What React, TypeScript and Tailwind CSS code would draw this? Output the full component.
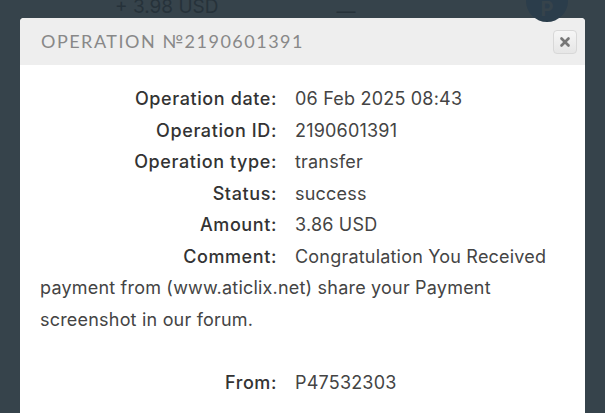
import { X } from 'lucide-react'

const ROWS = [
  { label: 'Operation date:', value: '06 Feb 2025 08:43' },
  { label: 'Operation ID:', value: '2190601391' },
  { label: 'Operation type:', value: 'transfer' },
  { label: 'Status:', value: 'success' },
  { label: 'Amount:', value: '3.86 USD' },
]

function Label({ children }: { children: string }) {
  return <span className="inline-block w-[237px] text-right text-[#333] font-medium tracking-[0.6px]">{children}</span>
}

function Row({ label, value }: { label: string; value: string }) {
  return (
    <div>
      <Label>{label}</Label>
      <span className="ml-[18px]">{value}</span>
    </div>
  )
}

export default function App() {
  return (
    <div className="relative h-[413px] w-full overflow-hidden bg-[#36434b] font-['Inter',sans-serif]">
      {/* page behind the overlay */}
      <div className="flex items-start h-[18px] text-[#26323a] text-[19px] leading-none">
        <span className="ml-[115px] -mt-[3px]">+ 3.98 USD</span>
        <span className="ml-[118px] mt-[2px]">—</span>
        <div className="ml-auto mr-[37px] -mt-[20px] w-[42px] h-[42px] rounded-full bg-[#2b3d4b] flex items-end justify-center text-[#36434b] font-bold text-[20px] pb-[3px]">P</div>
      </div>

      {/* modal */}
      <div className="mx-[20px] rounded-t-[4px] bg-white overflow-hidden">
        <div className="flex items-center justify-between h-[47px] bg-[#eeeeee] pl-[21px] pr-[8px]">
          <h2 className="font-['Lato',sans-serif] text-[18px] tracking-[1.5px] text-[#888]">OPERATION №2190601391</h2>
          <button className="w-[24px] h-[24px] rounded-[4px] border border-[#d8d8d8] bg-gradient-to-b from-[#f6f6f6] to-[#e6e6e6] flex items-center justify-center">
            <X size={14} strokeWidth={4.5} className="text-[#777]" />
          </button>
        </div>
        <div className="px-[20px] pt-[18px] pb-[20px] text-[18px] tracking-[0.2px] leading-[31.5px] text-[#444]">
          {ROWS.map(r => (
            <Row key={r.label} {...r} />
          ))}
          <p>
            <Label>Comment:</Label>
            <span className="ml-[18px]">Congratulation You Received payment from (www.aticlix.net) share your Payment screenshot in our forum.</span>
          </p>
          <div className="h-[31.5px]" />
          <Row label="From:" value="P47532303" />
        </div>
      </div>
    </div>
  )
}
